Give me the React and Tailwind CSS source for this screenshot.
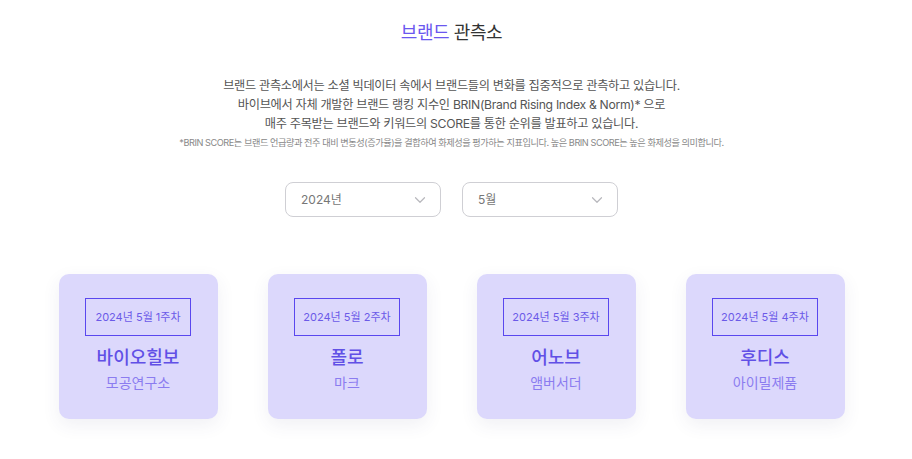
import { ChevronDown } from "lucide-react";

const weeks = [
  { label: "2024년 5월 1주차", name: "바이오힐보", sub: "모공연구소" },
  { label: "2024년 5월 2주차", name: "폴로", sub: "마크" },
  { label: "2024년 5월 3주차", name: "어노브", sub: "앰버서더" },
  { label: "2024년 5월 4주차", name: "후디스", sub: "아이밀제품" },
];

function Select({ value }) {
  return (
    <div className="flex h-[35px] w-[156px] items-center justify-between rounded-lg border border-[#cfcfd4] bg-white pl-[15px] pr-[11px] text-[12px] text-[#777]">
      <span>{value}</span>
      <ChevronDown size={18} strokeWidth={1.6} className="text-[#b8b8bd]" />
    </div>
  );
}

export default function App() {
  return (
    <div
      className="min-h-[459px] w-full bg-white pr-[9px] text-center"
      style={{ fontFamily: 'Inter, "Noto Sans CJK KR", sans-serif' }}
    >
      <h1 className="pt-[21px] text-[18px] font-normal leading-[24px] tracking-tight text-[#333]">
        <span className="text-[#6b57ef]">브랜드</span> 관측소
      </h1>

      <div className="mt-[31px] text-[12.2px] leading-[19px] tracking-tight text-[#555]">
        <p>브랜드 관측소에서는 소셜 빅데이터 속에서 브랜드들의 변화를 집중적으로 관측하고 있습니다.</p>
        <p>바이브에서 자체 개발한 브랜드 랭킹 지수인 BRIN(Brand Rising Index &amp; Norm)* 으로</p>
        <p>매주 주목받는 브랜드와 키워드의 SCORE를 통한 순위를 발표하고 있습니다.</p>
      </div>
      <p className="mt-[3px] text-[9.2px] leading-[14px] tracking-tighter text-[#888]">
        *BRIN SCORE는 브랜드 언급량과 전주 대비 변동성(증가율)을 결합하여 화제성을 평가하는 지표입니다. 높은 BRIN SCORE는 높은 화제성을 의미합니다.
      </p>

      <div className="mt-[32px] flex justify-center gap-[21px]">
        <Select value="2024년" />
        <Select value="5월" />
      </div>

      <div className="mt-[57px] flex justify-center gap-[50px]">
        {weeks.map((w) => (
          <div
            key={w.label}
            className="flex h-[145px] w-[159px] flex-col items-center rounded-[10px] bg-[#dcd8fc] pt-[24px] shadow-[0_6px_18px_rgba(60,70,110,0.08)]"
          >
            <div className="flex h-[38px] w-[106px] items-center justify-center border border-[#5a47ef] text-[11px] text-[#6b5ae8]">
              {w.label}
            </div>
            <div className="mt-[10px] text-[18px] font-medium leading-[24px] text-[#6150e6]">
              {w.name}
            </div>
            <div className="mt-[4px] text-[14px] leading-[18px] text-[#8b7cf0]">
              {w.sub}
            </div>
          </div>
        ))}
      </div>
    </div>
  );
}
